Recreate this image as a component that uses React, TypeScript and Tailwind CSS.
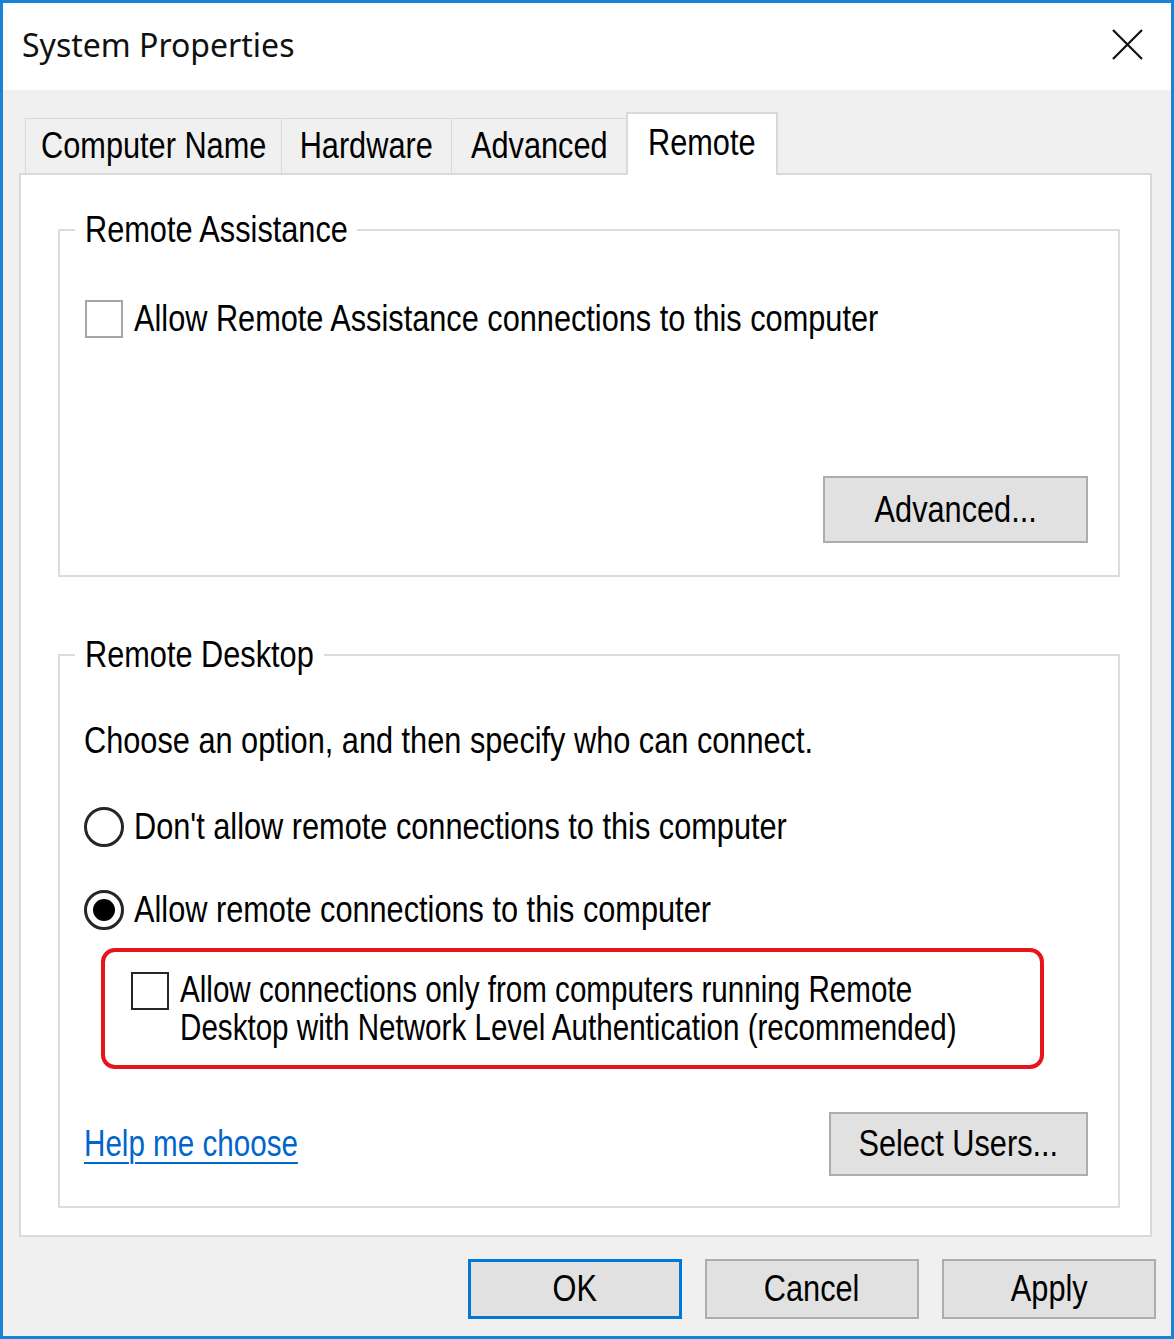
import React from 'react';

const ui = "font-['Liberation_Sans',Arial,sans-serif] text-[37px] text-black";

// Dialog text in the shot is a narrow face; squeeze Arial metrics to match.
function T({ children, center, narrow, className = '' }: { children: React.ReactNode; center?: boolean; narrow?: boolean; className?: string }) {
  return (
    <span
      className={`inline-block whitespace-nowrap ${narrow ? 'scale-x-[0.8]' : 'scale-x-[0.83]'} ${
        center ? 'origin-center' : 'origin-left'
      } ${className}`}
    >
      {children}
    </span>
  );
}

function Checkbox({ dark }: { dark?: boolean }) {
  return (
    <span
      className={`block w-[38px] h-[38px] shrink-0 bg-white border-2 ${dark ? 'border-[#262626]' : 'border-[#a6a6a6]'}`}
    />
  );
}

function Radio({ checked }: { checked?: boolean }) {
  return (
    <span className="flex items-center justify-center w-[40px] h-[40px] shrink-0 rounded-full border-[3px] border-[#262626] bg-white">
      {checked && <span className="block w-[22px] h-[22px] rounded-full bg-black" />}
    </span>
  );
}

function Button({ label, w, h, primary }: { label: string; w: string; h: string; primary?: boolean }) {
  return (
    <button
      className={`${w} ${h} flex items-center justify-center bg-[#e1e1e1] ${
        primary ? 'border-[3px] border-[#0078d7]' : 'border-2 border-[#adadad]'
      }`}
    >
      <T center>{label}</T>
    </button>
  );
}

function GroupBox({ title, titleW, className, children }: { title: string; titleW: string; className: string; children: React.ReactNode }) {
  return (
    <fieldset className={`border-2 border-[#dcdcdc] ${className}`}>
      <legend className="ml-[15px] px-[10px] leading-[40px]">
        <span className={`inline-block ${titleW}`}>
          <T>{title}</T>
        </span>
      </legend>
      {children}
    </fieldset>
  );
}

const tabs = [
  { label: 'Computer Name', w: 'w-[257px]' },
  { label: 'Hardware', w: 'w-[171px]' },
  { label: 'Advanced', w: 'w-[176px]' },
];

export default function App() {
  return (
    <div className={`w-[1174px] h-[1339px] flex flex-col border-[3px] border-[#1883d7] bg-[#f0f0f0] ${ui}`}>
      {/* Title bar */}
      <div className="h-[87px] shrink-0 flex items-center justify-between bg-white pl-[19px] pr-[28px]">
        <span className="font-['Noto_Sans',sans-serif] text-[32px] text-[#111] pb-[4px]">System Properties</span>
        <svg width="31" height="31" viewBox="0 0 31 31" className="mb-[4px]">
          <path d="M1 1 L30 30 M30 1 L1 30" stroke="#111" strokeWidth="2.2" fill="none" />
        </svg>
      </div>

      <div className="flex flex-col pl-[16px] pr-[19px] pt-[22px]">
        {/* Tabs */}
        <div className="relative z-10 flex items-end h-[63px] -mb-[2px] pl-[6px]">
          {tabs.map((t) => (
            <div
              key={t.label}
              className={`${t.w} h-[55px] mb-[2px] -ml-px first:ml-0 flex items-center justify-center border border-b-0 border-[#d9d9d9] bg-[#f0f0f0]`}
            >
              <T center>{t.label}</T>
            </div>
          ))}
          <div className="w-[152px] h-[63px] -ml-px flex items-center justify-center pb-[4px] border-2 border-b-0 border-[#d9d9d9] bg-white">
            <T center>Remote</T>
          </div>
        </div>

        {/* Panel */}
        <div className="h-[1064px] border-2 border-[#d9d9d9] bg-white pt-[35px] pl-[37px] pr-[30px]">
          <GroupBox title="Remote Assistance" titleW="w-[262px]" className="h-[367px]">
            <div className="flex flex-col pl-[25px] pr-[30px]">
              <div className="mt-[50px] flex items-center h-[38px] gap-[11px]">
                <Checkbox />
                <T>Allow Remote Assistance connections to this computer</T>
              </div>
              <div className="mt-[138px] flex justify-end">
                <Button label="Advanced..." w="w-[265px]" h="h-[67px]" />
              </div>
            </div>
          </GroupBox>

          <GroupBox title="Remote Desktop" titleW="w-[229px]" className="mt-[58px] h-[573px]">
            <div className="flex flex-col pl-[24px] pr-[30px]">
              <div className="mt-[46px] h-[40px] flex items-center">
                <T>Choose an option, and then specify who can connect.</T>
              </div>
              <div className="mt-[46px] h-[40px] flex items-center gap-[10px]">
                <Radio />
                <T>Don't allow remote connections to this computer</T>
              </div>
              <div className="mt-[43px] h-[40px] flex items-center gap-[10px]">
                <Radio checked />
                <T>Allow remote connections to this computer</T>
              </div>
              <div className="mt-[18px] ml-[17px] w-[943px] h-[121px] rounded-[14px] border-4 border-[#e8141c] flex items-start gap-[11px] pl-[26px] pt-[19px]">
                <span className="mt-[1px]">
                  <Checkbox dark />
                </span>
                <span className="leading-[38px]">
                  <T narrow>
                    Allow connections only from computers running Remote
                    <br />
                    Desktop with Network Level Authentication (recommended)
                  </T>
                </span>
              </div>
              <div className="mt-[43px] h-[64px] flex items-center justify-between">
                <a href="#" className="text-[#0066cc]">
                  <T narrow className="underline underline-offset-[6px] decoration-2">
                    Help me choose
                  </T>
                </a>
                <Button label="Select Users..." w="w-[259px]" h="h-[64px]" />
              </div>
            </div>
          </GroupBox>
        </div>

        {/* Dialog buttons */}
        <div className="mt-[22px] flex justify-end gap-[23px] -mr-[4px]">
          <Button label="OK" w="w-[214px]" h="h-[60px]" primary />
          <Button label="Cancel" w="w-[214px]" h="h-[60px]" />
          <Button label="Apply" w="w-[214px]" h="h-[60px]" />
        </div>
      </div>
    </div>
  );
}
